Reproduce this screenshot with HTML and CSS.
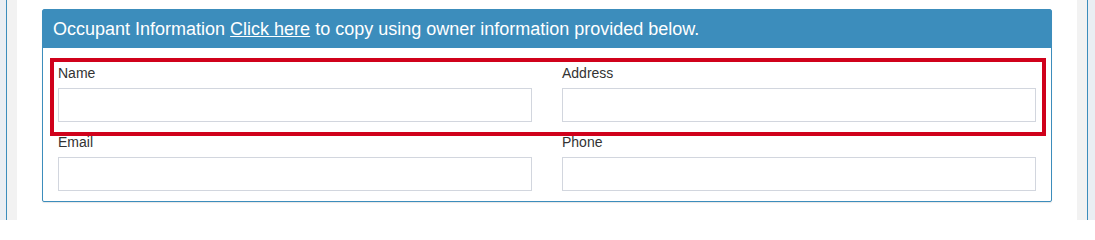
FILE: index.html
```html
<!DOCTYPE html>
<html>
<head>
<meta charset="utf-8">
<link rel="stylesheet" href="styles.css">
</head>
<body>
<div class="page">
  <div class="edge edge-left"></div>
  <div class="gutter"></div>
  <main class="main">
    <section class="panel">
      <header class="panel-heading">Occupant Information <a class="copy-link" href="#">Click here</a> to copy using owner information provided below.</header>
      <div class="panel-body">
        <div class="form-row highlighted">
          <div class="form-group">
            <label class="field-label">Name</label>
            <input class="form-control" type="text">
          </div>
          <div class="form-group">
            <label class="field-label">Address</label>
            <input class="form-control" type="text">
          </div>
        </div>
        <div class="form-row">
          <div class="form-group">
            <label class="field-label">Email</label>
            <input class="form-control" type="text">
          </div>
          <div class="form-group">
            <label class="field-label">Phone</label>
            <input class="form-control" type="text">
          </div>
        </div>
      </div>
    </section>
  </main>
  <div class="gutter"></div>
  <div class="edge edge-right"></div>
</div>
</body>
</html>
```

FILE: styles.css
```css
* { box-sizing: border-box; }
html, body { margin: 0; padding: 0; }
body {
  font-family: "Liberation Sans", Arial, sans-serif;
  font-size: 14px;
  color: #333;
  background: #fff;
}
.page {
  display: flex;
  height: 220px;
  overflow: hidden;
}
.edge {
  background: #eaeef3;
}
.edge-left {
  width: 7px;
  border-right: 1px solid #3c8dbc;
}
.edge-right {
  width: 8px;
  border-left: 1px solid #3c8dbc;
}
.gutter {
  width: 10px;
  background: #f2f2f2;
}
.main {
  flex: 1;
  padding: 9px 25px 0 25px;
  background: #fff;
}
.panel {
  border: 1px solid #3c8dbc;
  border-radius: 3px 3px 2px 2px;
  box-shadow: 0 1px 1px rgba(0,0,0,0.1);
  background: #fff;
}
.panel-heading {
  background: #3c8dbc;
  color: #fff;
  font-size: 18px;
  height: 38px;
  line-height: 38px;
  padding-left: 11px;
  margin: -1px -1px 0 -1px;
  padding-top: 1px;
  box-sizing: content-box;
  border-radius: 3px 3px 0 0;
}
.copy-link {
  color: #fff;
  text-decoration: underline;
}
.panel-body {
  padding: 16px 15px 10px 15px;
  display: flex;
  flex-direction: column;
  gap: 11px;
}
.form-row {
  display: grid;
  grid-template-columns: 1fr 1fr;
  column-gap: 30px;
}
.highlighted {
  position: relative;
}
.highlighted::after {
  content: "";
  position: absolute;
  top: -6px;
  left: -8px;
  right: -10px;
  bottom: -14px;
  border: 4px solid #d0011b;
  pointer-events: none;
}
.form-group {
  display: flex;
  flex-direction: column;
}
.field-label {
  display: block;
  height: 20px;
  line-height: 18px;
  margin-bottom: 4px;
  font-size: 14px;
  color: #333;
}
.form-control {
  display: block;
  width: 100%;
  height: 34px;
  border: 1px solid #d2d6de;
  border-radius: 0;
  background: #fff;
  padding: 6px 12px;
  font-family: inherit;
  font-size: 14px;
  margin: 0;
}
```
